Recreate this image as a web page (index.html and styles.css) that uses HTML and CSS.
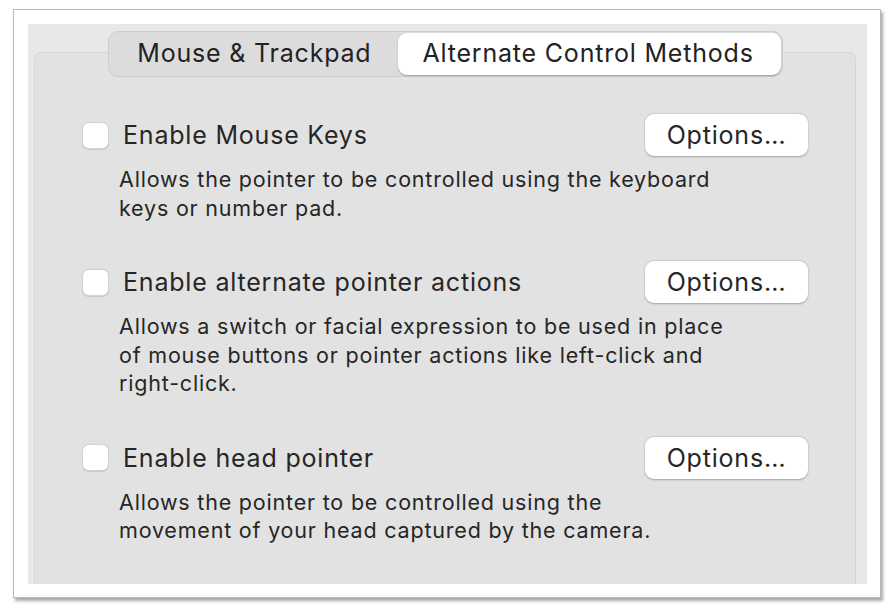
FILE: index.html
```html
<!DOCTYPE html>
<html lang="en">
<head>
<meta charset="utf-8">
<title>Alternate Control Methods</title>
<link rel="stylesheet" href="styles.css">
</head>
<body>
<div class="frame">
  <div class="window">
    <div class="tabs">
      <div class="tab">Mouse &amp; Trackpad</div>
      <div class="tab tab-selected">Alternate Control Methods</div>
    </div>
    <div class="box">
      <div class="setting">
        <div class="setting-head">
          <span class="checkbox"></span>
          <span class="setting-title">Enable Mouse Keys</span>
          <button class="options">Options…</button>
        </div>
        <p class="setting-desc">Allows the pointer to be controlled using the keyboard<br>keys or number pad.</p>
      </div>
      <div class="setting">
        <div class="setting-head">
          <span class="checkbox"></span>
          <span class="setting-title">Enable alternate pointer actions</span>
          <button class="options">Options…</button>
        </div>
        <p class="setting-desc">Allows a switch or facial expression to be used in place<br>of mouse buttons or pointer actions like left-click and<br>right-click.</p>
      </div>
      <div class="setting">
        <div class="setting-head">
          <span class="checkbox"></span>
          <span class="setting-title">Enable head pointer</span>
          <button class="options">Options…</button>
        </div>
        <p class="setting-desc">Allows the pointer to be controlled using the<br>movement of your head captured by the camera.</p>
      </div>
    </div>
  </div>
</div>
</body>
</html>
```

FILE: styles.css
```css
html, body {
  margin: 0;
  padding: 0;
  background: #ffffff;
}
body {
  width: 893px;
  height: 612px;
  overflow: hidden;
  font-family: "Inter", "Liberation Sans", sans-serif;
  color: #262626;
  letter-spacing: 0.8px;
}
.frame {
  box-sizing: border-box;
  margin: 9px 0 0 13px;
  width: 868px;
  height: 589px;
  background: #ffffff;
  border: 1px solid #b9b9b9;
  box-shadow: 2px 3px 3px rgba(0, 0, 0, 0.35);
  padding: 14px 13px 13px 14px;
}
.window {
  box-sizing: border-box;
  height: 100%;
  background: #e8e8e8;
  padding: 7px 11px 0 6px;
  display: flex;
  flex-direction: column;
  overflow: hidden;
}
.tabs {
  align-self: center;
  position: relative;
  z-index: 1;
  display: flex;
  height: 46px;
  box-sizing: border-box;
  margin-bottom: -25px;
  margin-left: 1px;
  background: #dcdcdc;
  border: 1px solid #cdcdcd;
  border-radius: 10px;
  padding: 1px;
}
.tab {
  display: flex;
  align-items: center;
  font-size: 25px;
  padding: 0 27px 2px 27px;
  border-radius: 9px;
  color: #222222;
}
.tab-selected {
  background: #ffffff;
  box-shadow: 0 1px 1.5px rgba(0, 0, 0, 0.28);
  padding: 0 27px 2px 24px;
}
.box {
  flex: 1;
  box-sizing: border-box;
  background: #e2e2e2;
  border: 1px solid #d6d6d6;
  border-bottom: none;
  border-radius: 7px 7px 0 0;
  padding: 61px 47px 0 47px;
  display: flex;
  flex-direction: column;
  gap: 39px;
}
.setting-head {
  display: flex;
  align-items: center;
  height: 42px;
}
.checkbox {
  width: 27px;
  height: 27px;
  box-sizing: border-box;
  background: #ffffff;
  border: 1px solid #d3d3d3;
  border-radius: 7px;
  box-shadow: 0 0.5px 1px rgba(0, 0, 0, 0.12);
  margin-right: 14px;
}
.setting-title {
  font-size: 25px;
  flex: 1;
}
.options {
  width: 163px;
  height: 42px;
  background: #ffffff;
  border: none;
  border-radius: 9px;
  box-shadow: 0 0.5px 2px rgba(0, 0, 0, 0.3);
  font-family: inherit;
  font-size: 25px;
  letter-spacing: 0.8px;
  color: #262626;
  padding: 0;
}
.setting-desc {
  margin: 9px 0 0 37px;
  font-size: 21.5px;
  line-height: 28.5px;
  color: #262626;
}
```
